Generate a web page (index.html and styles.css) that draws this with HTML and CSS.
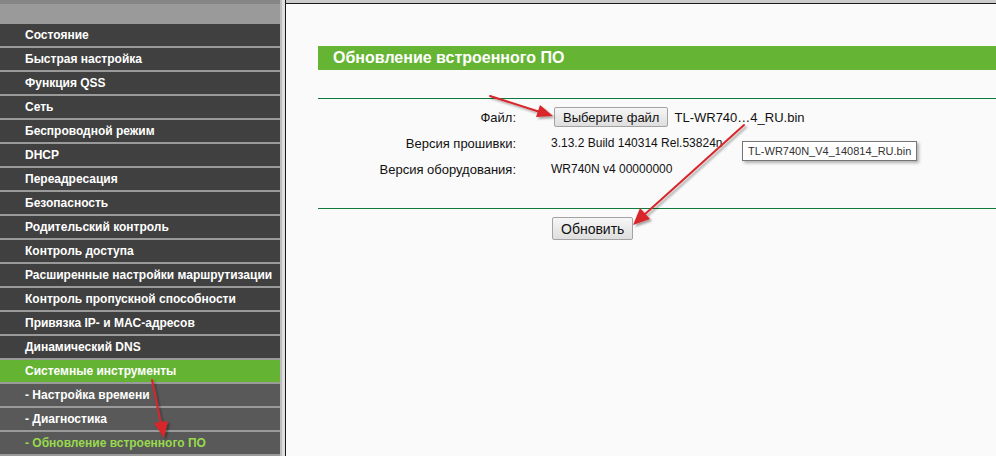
FILE: index.html
```html
<!DOCTYPE html>
<html>
<head>
    <title>Обновление встроенного ПО</title>
    <link rel="stylesheet" href="styles.css">
</head>
<body>
    <!-- Меню слева -->
    <div class="sidebar">
        <div class="sidebar-head"></div>
        <ul class="menu">
            <li>Состояние</li>
            <li>Быстрая настройка</li>
            <li>Функция QSS</li>
            <li>Сеть</li>
            <li>Беспроводной режим</li>
            <li>DHCP</li>
            <li>Переадресация</li>
            <li>Безопасность</li>
            <li>Родительский контроль</li>
            <li>Контроль доступа</li>
            <li>Расширенные настройки маршрутизации</li>
            <li>Контроль пропускной способности</li>
            <li>Привязка IP- и MAC-адресов</li>
            <li>Динамический DNS</li>
            <li class="active">Системные инструменты</li>
            <li class="sub">- Настройка времени</li>
            <li class="sub">- Диагностика</li>
            <li class="sub current">- Обновление встроенного ПО</li>
        </ul>
    </div>
    <div class="gutter"></div>

    <!-- Основная часть -->
    <div class="main">
        <h2 class="title">Обновление встроенного ПО</h2>
        <div class="line"></div>
        <div class="form">
            <div class="row">
                <div class="label">Файл:</div>
                <div class="value">
                    <button class="btn">Выберите файл</button>
                    <span class="filename">TL-WR740…4_RU.bin</span>
                </div>
            </div>
            <div class="row">
                <div class="label">Версия прошивки:</div>
                <div class="value">3.13.2 Build 140314 Rel.53824n</div>
            </div>
            <div class="row">
                <div class="label">Версия оборудования:</div>
                <div class="value">WR740N v4 00000000</div>
            </div>
        </div>
        <div class="line"></div>
        <div class="actions">
            <button class="btn btn-big">Обновить</button>
        </div>
    </div>

    <div class="tooltip">TL-WR740N_V4_140814_RU.bin</div>

    <!-- стрелки поверх скриншота -->
    <svg class="arrows" width="996" height="456" viewBox="0 0 996 456">
        <defs>
            <filter id="sh" x="-20%" y="-20%" width="140%" height="140%">
                <feDropShadow dx="2" dy="2" stdDeviation="1.2" flood-color="#000" flood-opacity="0.35"/>
            </filter>
        </defs>
        <g filter="url(#sh)" fill="#d8262b" stroke="#d8262b" stroke-width="2" stroke-linecap="round">
            <line x1="490" y1="96" x2="540" y2="112"/>
            <polygon points="553,116 536,117 540,105" stroke="none"/>
            <line x1="744" y1="125" x2="644" y2="215"/>
            <polygon points="633,225 640,208 650,219" stroke="none"/>
            <line x1="152" y1="380" x2="161" y2="424"/>
            <polygon points="164,438 154,423 168,421" stroke="none"/>
        </g>
    </svg>
</body>
</html>
```

FILE: styles.css
```css
body {
    margin: 0;
    display: flex;
    height: 456px;
    overflow: hidden;
    background: #fafafa;
    font-family: "Liberation Sans", Arial, sans-serif;
}

.sidebar {
    width: 280px;
    flex-shrink: 0;
    background: #9a9a9a;
    border-top: 4px solid #858585;
}

.sidebar-head {
    height: 20px;
}

.menu {
    list-style: none;
    margin: 0;
    padding: 0;
}

.menu li {
    height: 22px;
    line-height: 22px;
    padding-left: 25px;
    border-bottom: 2px solid #9a9a9a;
    background: #404040;
    color: #fff;
    font-size: 12px;
    font-weight: bold;
    white-space: nowrap;
}

.menu li.active {
    background: #64b332;
}

.menu li.sub {
    background: #595959;
}

.menu li.current {
    color: #98d94e;
}

.gutter {
    width: 5px;
    flex-shrink: 0;
    background: linear-gradient(to right, #bdbdbd 0, #bdbdbd 2px, #dedede 2px);
    border-right: 1px solid #1a1a1a;
}

.main {
    flex: 1;
    border-top: 3px solid #cbcbcb;
    box-shadow: inset 0 1px 0 #1a1a1a;
    padding: 43px 0 0 32px;
}

.title {
    margin: 0;
    height: 24px;
    line-height: 24px;
    padding-left: 15px;
    background: #66b434;
    color: #fff;
    font-size: 16px;
    font-weight: bold;
}

.line {
    height: 1px;
    background: #0e7a3c;
    margin-top: 28px;
}

.form {
    padding: 5px 0 26px;
}

.row {
    display: flex;
    height: 26px;
    align-items: center;
    font-size: 12px;
    color: #111;
}

.label {
    width: 198px;
    text-align: right;
    margin-right: 35px;
    font-size: 13px;
}

.value {
    display: flex;
    align-items: center;
}

.btn {
    font-family: "Liberation Sans", Arial, sans-serif;
    font-size: 13px;
    color: #111;
    height: 20px;
    padding: 0 8px;
    margin: 0 0 0 3px;
    border: 1px solid #a3a3a3;
    border-radius: 2px;
    background: linear-gradient(#f6f6f6, #dedede);
}

.filename {
    font-size: 13px;
    margin-left: 6px;
}

.form + .line {
    margin-top: 0;
}

.actions {
    padding: 8px 0 0 234px;
}

.btn-big {
    height: 23px;
    font-size: 14px;
    padding: 0 8px;
    margin: 0;
}

.tooltip {
    position: absolute;
    left: 742px;
    top: 141px;
    height: 18px;
    line-height: 18px;
    padding: 0 5px;
    font-size: 11px;
    color: #333;
    background: #fff;
    border: 1px solid #767676;
    box-shadow: 2px 2px 3px rgba(0, 0, 0, 0.3);
}

.arrows {
    position: absolute;
    left: 0;
    top: 0;
    pointer-events: none;
}
```
